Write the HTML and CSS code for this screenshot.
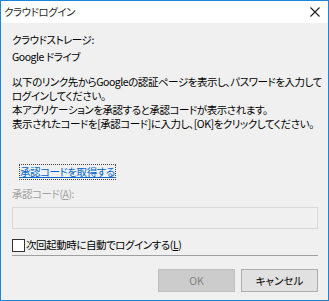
FILE: index.html
```html
<!DOCTYPE html>
<html lang="ja">
  <head>
    <meta charset="UTF-8" />
    <title>クラウドログイン</title>
    <link rel="stylesheet" href="styles.css">
  </head>
  <body>
    <div class="window">
      <div class="titlebar">
        <span class="title">クラウドログイン</span>
        <svg class="close" width="10" height="10" viewBox="0 0 10 10">
          <path d="M0.5 0.5 L9.5 9.5 M9.5 0.5 L0.5 9.5" stroke="#1e1e1e" stroke-width="1.1" />
        </svg>
      </div>

      <div class="content">
        <div class="label">クラウドストレージ:</div>
        <div class="service">Google ドライブ</div>

        <p class="message">
          以下のリンク先からGoogleの認証ページを表示し、パスワードを入力して<br />
          ログインしてください。<br />
          本アプリケーションを承認すると承認コードが表示されます。<br />
          表示されたコードを[承認コード]に入力し、[OK]をクリックしてください。
        </p>

        <a class="auth-link" href="#">承認コードを取得する</a>

        <div class="code-label">承認コード(<u>A</u>):</div>
        <div class="code-input"></div>

        <label class="auto-login">
          <span class="checkbox"></span>
          <span>次回起動時に自動でログインする(<u>L</u>)</span>
        </label>

        <div class="separator"></div>

        <div class="buttons">
          <button class="btn" disabled>OK</button>
          <button class="btn">キャンセル</button>
        </div>
      </div>
    </div>
  </body>
</html>
```

FILE: styles.css
```css
body {
  margin: 0;
  font-family: "Noto Sans CJK JP", "Noto Sans", sans-serif;
  font-size: 10.5px;
  font-feature-settings: "palt";
  letter-spacing: -0.45px;
  color: #000;
  background-color: #fff;
}
.window {
  width: 329px;
  height: 301px;
  box-sizing: border-box;
  border: 1px solid #1b86d8;
  background-color: #f0f0f0;
  display: flex;
  flex-direction: column;
  overflow: hidden;
}
.titlebar {
  height: 22px;
  flex-shrink: 0;
  background-color: #fff;
  display: flex;
  align-items: center;
  justify-content: space-between;
  padding: 0 8px 0 3px;
}
.title {
  color: #2b2b2b;
  line-height: 14px;
}
.close {
  margin-top: -1px;
}
.content {
  padding: 10px 10px 0 11px;
  line-height: 14px;
  white-space: nowrap;
}
.service {
  margin-top: 3px;
}
.message {
  margin: 11px 0 0 0;
}
.auth-link {
  display: inline-block;
  margin: 34px 0 0 8px;
  color: #0066cc;
  text-decoration: underline;
  outline: 1px dotted #444;
}
.code-label {
  margin-top: 8px;
  color: #a0a0a0;
}
.code-input {
  margin-top: 6px;
  height: 22px;
  box-sizing: border-box;
  border: 1px solid #d9d9d9;
  background-color: #f0f0f0;
}
.auto-login {
  display: flex;
  align-items: center;
  gap: 1px;
  margin-top: 9px;
}
.checkbox {
  width: 13px;
  height: 13px;
  box-sizing: border-box;
  border: 1px solid #333;
  background-color: #fff;
}
.separator {
  margin-top: 3px;
  height: 1px;
  background-color: #a0a0a0;
}
.buttons {
  display: flex;
  justify-content: flex-end;
  gap: 6px;
  margin-top: 13px;
}
.btn {
  width: 77px;
  height: 23px;
  box-sizing: border-box;
  border: 1px solid #adadad;
  background-color: #e1e1e1;
  font-family: inherit;
  font-size: 10.5px;
  font-feature-settings: "palt";
  color: #000;
  padding: 0;
}
.btn:disabled {
  border-color: #bfbfbf;
  background-color: #cccccc;
  color: #838383;
}
```
